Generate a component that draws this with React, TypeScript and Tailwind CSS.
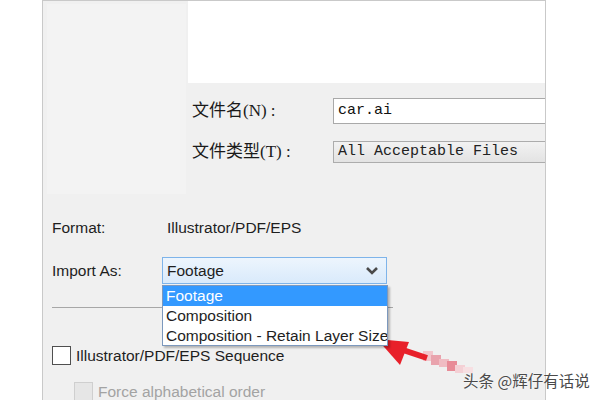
import React from "react";

const sans = "font-['Liberation_Sans',Arial,sans-serif]";

const Chevron = () => (
  <svg width="14" height="10" viewBox="0 0 14 10" className="shrink-0">
    <polyline points="2,2 7,7 12,2" fill="none" stroke="#4a4a4a" strokeWidth="2.6" />
  </svg>
);

const Arrow = () => (
  <svg width="120" height="50" viewBox="0 0 120 50" className="absolute left-[375px] top-[333px]">
    {/* blurred tail */}
    <rect x="48" y="18" width="10" height="10" fill="#f2c6cc" />
    <rect x="56" y="22" width="10" height="10" fill="#e9a3ad" />
    <rect x="64" y="26" width="10" height="8" fill="#f0bcc3" />
    <rect x="72" y="28" width="10" height="10" fill="#e88b97" />
    <rect x="80" y="32" width="10" height="8" fill="#f4d0d5" />
    <rect x="88" y="34" width="10" height="6" fill="#f7dfe2" />
    <line x1="28" y1="17" x2="52" y2="25" stroke="#e8202a" strokeWidth="6" />
    <polygon points="2,6 34,9 25,32" fill="#e8202a" />
  </svg>
);

export default function App() {
  return (
    <div className={`relative w-[600px] h-[400px] overflow-hidden bg-white ${sans}`}>
      <div className="ml-[42px] w-[504px] h-full border-l border-r border-t border-[#c9c9c9] bg-[#f0f0f0]">
        {/* top: preview + file fields */}
        <div className="flex">
          <div className="ml-[4px] mt-[3px] w-[139px] h-[190px] bg-[#f3f3f3]" />
          <div className="ml-[2px] flex-1 flex flex-col">
            <div className="h-[82px] bg-white" />
            <div className="mt-[15px] flex items-center h-[26px]">
              <div className="w-[145px] pl-[4px] text-[17px] text-[#1a1a1a] font-['Liberation_Serif','Noto_Sans_CJK_SC',serif]">
                文件名(N) :
              </div>
              <div className="flex-1 h-[26px] bg-white border border-r-0 border-[#a9a9a9] flex items-center pl-[4px] text-[15px] text-[#111] font-['Liberation_Mono',monospace]">
                car.ai
              </div>
            </div>
            <div className="mt-[17px] flex items-center h-[22px]">
              <div className="w-[145px] pl-[4px] text-[17px] text-[#1a1a1a] font-['Liberation_Serif','Noto_Sans_CJK_SC',serif]">
                文件类型(T) :
              </div>
              <div className="flex-1 h-[22px] bg-gradient-to-b from-[#f2f2f2] to-[#e3e3e3] border border-r-0 border-[#acacac] flex items-center pl-[4px] text-[15px] text-[#222] font-['Liberation_Mono',monospace]">
                All Acceptable Files
              </div>
            </div>
          </div>
        </div>

        {/* format / import as */}
        <div className="pl-[9px] text-[15.5px] text-[#1e1e1e]">
          <div className="mt-[24px] h-[20px] flex items-center">
            <div className="w-[115px]">Format:</div>
            <div>Illustrator/PDF/EPS</div>
          </div>
          <div className="mt-[19px] h-[27px] flex items-center">
            <div className="w-[110px]">Import As:</div>
            <div className="relative w-[225px] h-[27px]">
              <div className="h-full border border-[#7eb4ea] bg-gradient-to-b from-[#edf5fd] to-[#d9eafb] flex items-center justify-between pl-[4px] pr-[7px]">
                <span>Footage</span>
                <Chevron />
              </div>
              <div className="absolute left-0 top-[28px] w-[226px] z-10 bg-white border border-[#7c98bd] shadow-[2px_2px_2px_rgba(0,0,0,0.25)] leading-[19px]">
                <div className="bg-[#3399ff] text-white pl-[3px] h-[20px]">Footage</div>
                <div className="pl-[3px] h-[20px]">Composition</div>
                <div className="pl-[3px] h-[19px] whitespace-nowrap overflow-hidden">Composition - Retain Layer Size</div>
              </div>
            </div>
          </div>
          <div className="mt-[23px] w-[341px] h-px bg-[#a7a7a7]" />
          <div className="mt-[38px] h-[19px] flex items-center">
            <div className="w-[19px] h-[19px] bg-white border border-[#4f4f4f]" />
            <span className="ml-[5px]">Illustrator/PDF/EPS Sequence</span>
          </div>
          <div className="mt-[17px] ml-[22px] h-[19px] flex items-center">
            <div className="w-[19px] h-[19px] bg-[#e6e6e6] border border-[#cfcfcf]" />
            <span className="ml-[5px] text-[#a3a3a3]">Force alphabetical order</span>
          </div>
        </div>
      </div>

      <Arrow />
      <div className="absolute left-[463px] top-[369px] text-[15.5px] text-[#4a4a4a] font-['Noto_Sans_CJK_SC',sans-serif] [text-shadow:0_0_2px_#fff]">
        头条 @辉仔有话说
      </div>
    </div>
  );
}
